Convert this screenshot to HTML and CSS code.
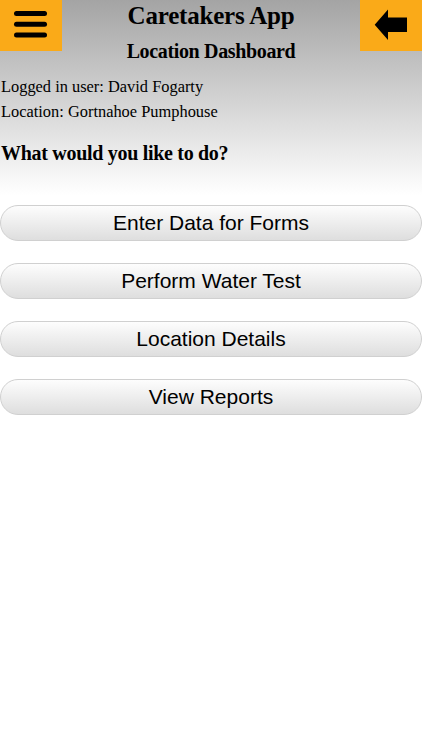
FILE: index.html
```html
<!DOCTYPE html>
<html lang="en">
<head>
    <meta charset="UTF-8">
    <meta name="viewport" content="width=device-width, initial-scale=1.0">
    <title>Caretakers App - Location Dashboard</title>
    <link rel="stylesheet" href="styles.css">
</head>
<body>
    <div class="top">
        <div class="header">
            <button type="button" class="corner-btn" aria-label="Menu">
                <svg width="62" height="51" viewBox="0 0 62 51">
                    <rect x="14" y="11" width="33" height="5" rx="2.5" fill="#000"/>
                    <rect x="14" y="21.7" width="33" height="5" rx="2.5" fill="#000"/>
                    <rect x="14" y="32.4" width="33" height="5" rx="2.5" fill="#000"/>
                </svg>
            </button>
            <div class="titles">
                <h1>Caretakers App</h1>
                <h2>Location Dashboard</h2>
            </div>
            <button type="button" class="corner-btn" aria-label="Back">
                <svg width="62" height="51" viewBox="0 0 62 51">
                    <polygon points="14.7,24.7 28,9.5 28,17.5 47,17.5 47,32 28,32 28,40" fill="#000"/>
                </svg>
            </button>
        </div>

        <p class="info first">Logged in user: David Fogarty</p>
        <p class="info">Location: Gortnahoe Pumphouse</p>

        <h3>What would you like to do?</h3>
    </div>

    <div class="menu">
        <button type="button" class="menu-btn">Enter Data for Forms</button>
        <button type="button" class="menu-btn">Perform Water Test</button>
        <button type="button" class="menu-btn">Location Details</button>
        <button type="button" class="menu-btn">View Reports</button>
    </div>
</body>
</html>
```

FILE: styles.css
```css
body {
    margin: 0;
    font-family: "Liberation Serif", "Times New Roman", serif;
    color: #000;
    background: #fff;
}
.top {
    background: linear-gradient(to bottom, #a4a4a4 0px, #ffffff 195px);
    height: 204px;
}
.header {
    display: flex;
    justify-content: space-between;
    align-items: flex-start;
}
.corner-btn {
    width: 62px;
    height: 51px;
    background-color: #faaa18;
    border: none;
    padding: 0;
    display: block;
}
.corner-btn svg {
    display: block;
}
.titles {
    text-align: center;
}
h1 {
    font-size: 25px;
    letter-spacing: -0.2px;
    line-height: 30px;
    margin: 1px 0 0 0;
}
h2 {
    font-size: 20px;
    letter-spacing: -0.35px;
    line-height: 24px;
    margin: 7.5px 0 0 0;
}
.info {
    font-size: 16.4px;
    line-height: 25px;
    margin: 0 0 0 1px;
}
.info.first {
    margin-top: 11.5px;
}
h3 {
    font-size: 20px;
    letter-spacing: -0.3px;
    line-height: 24px;
    margin: 16.5px 0 0 1px;
}
.menu {
    display: flex;
    flex-direction: column;
    gap: 22px;
    margin-top: 1px;
}
.menu-btn {
    height: 36px;
    width: 100%;
    border: 1px solid #d0d0d0;
    border-radius: 18px;
    background: linear-gradient(to bottom, #fdfdfd, #dedede);
    font-family: "Liberation Sans", Arial, sans-serif;
    font-size: 21px;
    color: #000;
    padding: 0;
}
```
